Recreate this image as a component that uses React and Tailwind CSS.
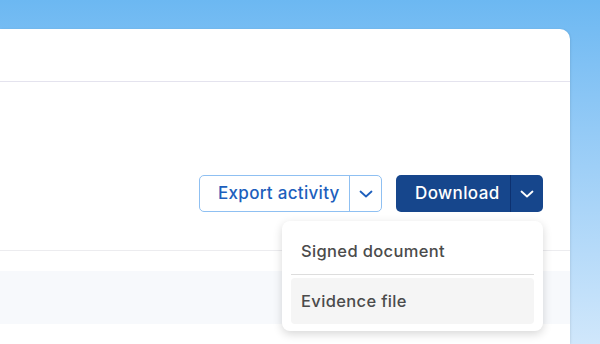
function Chevron({ className }) {
  return (
    <svg viewBox="0 0 14 8" className={className} fill="none" stroke="currentColor" strokeWidth="1.8" strokeLinecap="round" strokeLinejoin="round">
      <path d="M1.5 1.5 L7 6.5 L12.5 1.5" />
    </svg>
  );
}

export default function App() {
  return (
    <div className="relative h-[344px] w-[600px] overflow-hidden bg-gradient-to-b from-[#6cb8f2] to-[#d0e7fb] font-['Inter',sans-serif]">
      <div className="mt-[29px] h-[315px] w-[570px] rounded-tr-[10px] bg-white shadow-[1px_0_2px_rgba(0,0,0,0.08)]">
        {/* Header */}
        <div className="h-[53px] border-b border-[#e4e3ee]" />

        {/* Toolbar */}
        <div className="flex justify-end gap-[14px] pr-[27px] pt-[93px]">
          <div className="flex h-[37px] items-stretch rounded-[5px] border border-[#8fc0f2] bg-white text-[#1d5fbd]">
            <button className="w-[149px] whitespace-nowrap pl-[18px] text-left text-[17px] font-medium tracking-[0.3px]">Export activity</button>
            <span className="w-px bg-[#8fc0f2]" />
            <button className="flex w-[31px] items-center justify-center">
              <Chevron className="h-[8px] w-[14px]" />
            </button>
          </div>

          <div className="relative">
            <div className="flex h-[37px] items-stretch rounded-[5px] bg-[#16468c] text-white">
              <button className="w-[114px] whitespace-nowrap pl-[19px] text-left text-[17px] font-medium tracking-[0.4px]">Download</button>
              <span className="w-px bg-[#0d3170]" />
              <button className="flex w-[32px] items-center justify-center">
                <Chevron className="h-[8px] w-[14px]" />
              </button>
            </div>

            {/* Menu */}
            <div className="absolute right-0 top-[46px] z-10 w-[261px] rounded-[8px] bg-white px-[9px] pb-[7px] pt-[8px] text-[16.5px] font-medium tracking-[0.35px] text-[#4b4b4b] shadow-[0_3px_10px_rgba(0,0,0,0.16)]">
              <div className="flex h-[46px] items-center border-b border-[#dddddd] px-[10px]">Signed document</div>
              <div className="mt-[3px] flex h-[46px] items-center rounded-[4px] bg-[#f5f5f5] px-[10px]">Evidence file</div>
            </div>
          </div>
        </div>

        {/* Table */}
        <div className="mt-[38px] border-b border-[#ececef]" />
        <div className="mt-[20px] h-[53px] bg-[#f7f9fc]" />
      </div>
    </div>
  );
}
